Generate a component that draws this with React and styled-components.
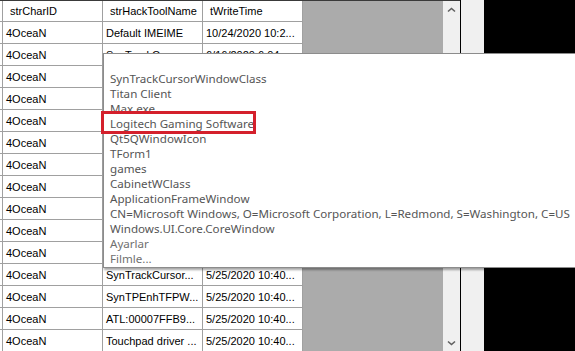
import styled, { createGlobalStyle } from "styled-components";

const GlobalStyle = createGlobalStyle`
  html, body {
    margin: 0;
    padding: 0;
    background: #000;
    overflow: hidden;
  }
  #root {
    width: 575px;
    height: 351px;
  }
`;

// rows 3-11 sit entirely under the dropdown, so only the first column shows there
const rows = [
  ["4OceaN", "Default IMEIME", "10/24/2020 10:2..."],
  ["4OceaN", "SynTrackCursor...", "6/16/2020 6:04:..."],
  ["4OceaN", "", ""],
  ["4OceaN", "", ""],
  ["4OceaN", "", ""],
  ["4OceaN", "", ""],
  ["4OceaN", "", ""],
  ["4OceaN", "", ""],
  ["4OceaN", "", ""],
  ["4OceaN", "", ""],
  ["4OceaN", "", ""],
  ["4OceaN", "SynTrackCursor...", "5/25/2020 10:40..."],
  ["4OceaN", "SynTPEnhTFPW...", "5/25/2020 10:40..."],
  ["4OceaN", "ATL:00007FFB9...", "5/25/2020 10:40..."],
  ["4OceaN", "Touchpad driver ...", "5/25/2020 10:40..."],
];

const suggestions = [
  "",
  "SynTrackCursorWindowClass",
  "Titan Client",
  "Max.exe",
  "Logitech Gaming Software",
  "Qt5QWindowIcon",
  "TForm1",
  "games",
  "CabinetWClass",
  "ApplicationFrameWindow",
  "CN=Microsoft Windows, O=Microsoft Corporation, L=Redmond, S=Washington, C=US",
  "Windows.UI.Core.CoreWindow",
  "Ayarlar",
  "Filmle...",
];

function Chevron({ down }) {
  return (
    <svg width="9" height="6" viewBox="0 0 9 6">
      <path
        d={down ? "M1 1.5 L4.5 4.5 L8 1.5" : "M1 4.5 L4.5 1.5 L8 4.5"}
        fill="none"
        stroke="#606060"
        strokeWidth="1.6"
      />
    </svg>
  );
}

export default function App() {
  return (
    <>
      <GlobalStyle />
      <Screen>
        <Grid>
          <Row $header>
            <Cell $header />
            <Cell $header>strCharID</Cell>
            <Cell $header>strHackToolName</Cell>
            <Cell $header>tWriteTime</Cell>
          </Row>
          {rows.map((r, i) => (
            <Row key={i}>
              <Cell />
              <Cell>{r[0]}</Cell>
              <Cell>{r[1]}</Cell>
              <Cell>{r[2]}</Cell>
            </Row>
          ))}
        </Grid>
        <ScrollBar>
          <ArrowButton>
            <Chevron />
          </ArrowButton>
          <ArrowButton>
            <Chevron down />
          </ArrowButton>
        </ScrollBar>
        <Divider />
        <Strip />
        <Blank />

        <Popup>
          {suggestions.map((s, i) => (
            <Item key={i} $faded={i >= 12}>
              {s}
            </Item>
          ))}
        </Popup>
        <Highlight />
      </Screen>
    </>
  );
}

const Screen = styled.div`
  position: relative;
  display: flex;
  width: 575px;
  height: 351px;
  overflow: hidden;
  background: #000;
`;

const Grid = styled.div`
  width: 443px;
  flex-shrink: 0;
  background: #ababab;
  border-top: 1px solid #3a3a3a;
  font-family: "Liberation Sans", Arial, sans-serif;
  font-size: 11px;
  color: #000;
`;

const Row = styled.div`
  display: grid;
  grid-template-columns: 3px 100px 100px 100px;
  height: ${(p) => (p.$header ? "21px" : "22px")};
`;

const Cell = styled.div`
  box-sizing: border-box;
  background: #fff;
  border-right: 1px solid #a0a0a0;
  border-bottom: 1px solid #a0a0a0;
  padding-left: ${(p) => (p.$header ? "7px" : "3px")};
  display: flex;
  align-items: center;
  white-space: nowrap;
  overflow: hidden;
  &:first-child {
    padding: 0;
  }
`;

const ScrollBar = styled.div`
  width: 17px;
  flex-shrink: 0;
  background: #f0f0f0;
  border-top: 1px solid #3a3a3a;
  display: flex;
  flex-direction: column;
  justify-content: space-between;
  padding: 6px 0 3px;
  box-sizing: border-box;
`;

const ArrowButton = styled.div`
  display: flex;
  justify-content: center;
  height: 8px;
`;

const Divider = styled.div`
  width: 1px;
  flex-shrink: 0;
  background: #000;
`;

const Strip = styled.div`
  width: 23px;
  flex-shrink: 0;
  background: #f0f0f0;
`;

const Blank = styled.div`
  flex: 1;
  background: #000;
`;

const Popup = styled.div`
  position: absolute;
  left: 103px;
  top: 53px;
  width: 490px;
  height: 215px;
  box-sizing: border-box;
  background: #fff;
  border: 1px solid #8c8c8c;
  box-shadow: 1px 2px 2px rgba(0, 0, 0, 0.35);
  padding: 2px 0 1px 6px;
  font-family: "Noto Sans", "Open Sans", sans-serif;
  font-size: 11.6px;
  color: #555;
`;

const Item = styled.div`
  height: 15px;
  line-height: 15px;
  white-space: nowrap;
  color: ${(p) => (p.$faded ? "#707070" : "#555")};
`;

const Highlight = styled.div`
  position: absolute;
  left: 101px;
  top: 111px;
  width: 155px;
  height: 23px;
  box-sizing: border-box;
  border: 3px solid #d4202c;
`;
